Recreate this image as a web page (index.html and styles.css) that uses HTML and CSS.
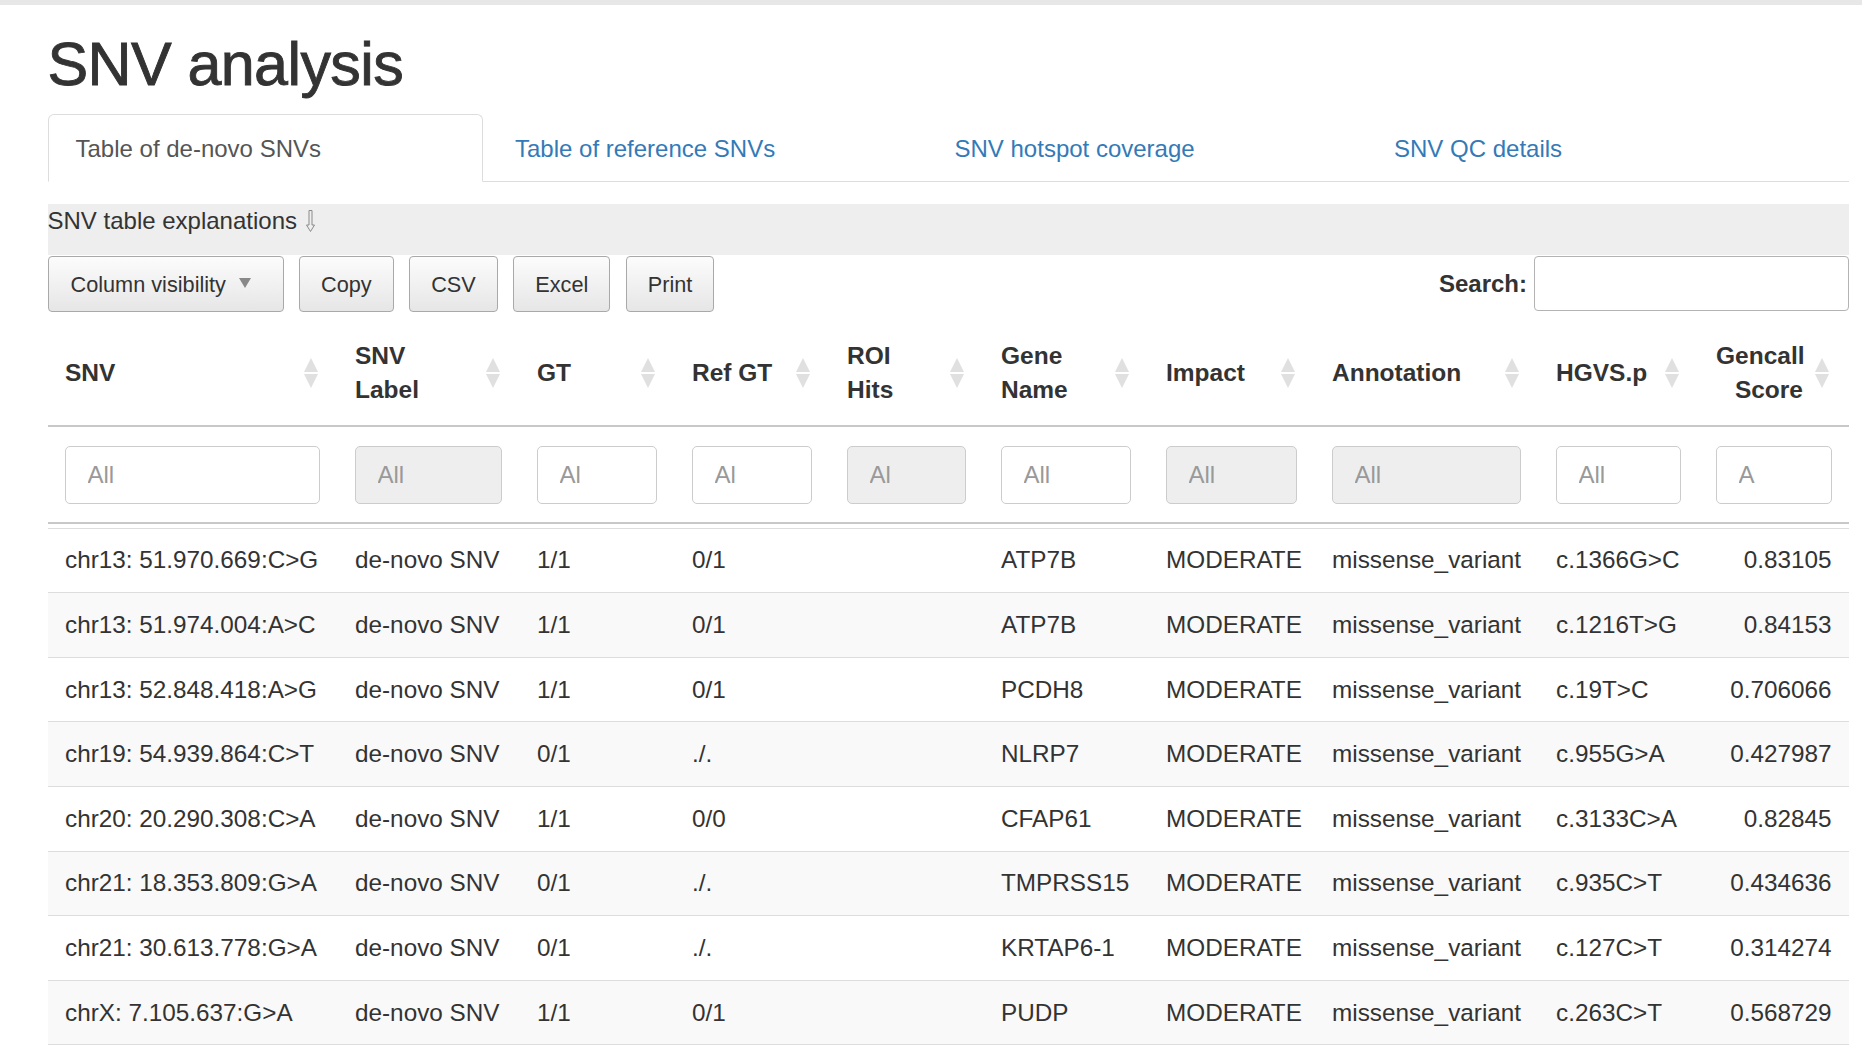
FILE: index.html
```html
<!DOCTYPE html>
<html lang="en">
<head>
<meta charset="utf-8">
<title>SNV analysis</title>
<link rel="stylesheet" href="styles.css">
</head>
<body>
<div class="topbar"></div>
<div class="container">
  <h1>SNV analysis</h1>
  <ul class="tabs">
    <li class="active"><a href="#">Table of de-novo SNVs</a></li>
    <li><a href="#">Table of reference SNVs</a></li>
    <li><a href="#">SNV hotspot coverage</a></li>
    <li><a href="#">SNV QC details</a></li>
  </ul>
  <div class="explain">SNV table explanations<svg class="down" width="9" height="22" viewBox="0 0 9 22"><path d="M3 0.5 H6 V15 H8.5 L4.5 21.5 L0.5 15 H3 Z" fill="none" stroke="#8a8a8a" stroke-width="1"/></svg></div>
  <div class="toolbar">
    <div class="btns">
      <button class="btn btn-cv">Column visibility<svg width="12" height="10" viewBox="0 0 12 10"><polygon points="0,0 12,0 6,10" fill="#888"/></svg></button>
      <button class="btn">Copy</button>
      <button class="btn">CSV</button>
      <button class="btn">Excel</button>
      <button class="btn">Print</button>
    </div>
    <label class="search">Search:<input type="text"></label>
  </div>
  <table class="snv">
    <colgroup>
      <col class="c1"><col class="c2"><col class="c3"><col class="c4"><col class="c5">
      <col class="c6"><col class="c7"><col class="c8"><col class="c9"><col class="c10">
    </colgroup>
    <thead>
      <tr class="heads">
        <th>SNV<span class="sorti"></span></th>
        <th>SNV<br>Label<span class="sorti"></span></th>
        <th>GT<span class="sorti"></span></th>
        <th>Ref GT<span class="sorti"></span></th>
        <th>ROI<br>Hits<span class="sorti"></span></th>
        <th>Gene<br>Name<span class="sorti"></span></th>
        <th>Impact<span class="sorti"></span></th>
        <th>Annotation<span class="sorti"></span></th>
        <th>HGVS.p<span class="sorti"></span></th>
        <th class="num">Gencall<br>Score<span class="sorti"></span></th>
      </tr>
      <tr class="filters">
        <td><input type="text" placeholder="All"></td>
        <td><input type="text" placeholder="All" disabled></td>
        <td><input type="text" placeholder="Al"></td>
        <td><input type="text" placeholder="Al"></td>
        <td><input type="text" placeholder="Al" disabled></td>
        <td><input type="text" placeholder="All"></td>
        <td><input type="text" placeholder="All" disabled></td>
        <td><input type="text" placeholder="All" disabled></td>
        <td><input type="text" placeholder="All"></td>
        <td><input type="text" placeholder="A"></td>
      </tr>
    </thead>
    <tbody>
      <tr><td>chr13: 51.970.669:C&gt;G</td><td>de-novo SNV</td><td>1/1</td><td>0/1</td><td></td><td>ATP7B</td><td>MODERATE</td><td>missense_variant</td><td>c.1366G&gt;C</td><td class="num">0.83105</td></tr>
      <tr><td>chr13: 51.974.004:A&gt;C</td><td>de-novo SNV</td><td>1/1</td><td>0/1</td><td></td><td>ATP7B</td><td>MODERATE</td><td>missense_variant</td><td>c.1216T&gt;G</td><td class="num">0.84153</td></tr>
      <tr><td>chr13: 52.848.418:A&gt;G</td><td>de-novo SNV</td><td>1/1</td><td>0/1</td><td></td><td>PCDH8</td><td>MODERATE</td><td>missense_variant</td><td>c.19T&gt;C</td><td class="num">0.706066</td></tr>
      <tr><td>chr19: 54.939.864:C&gt;T</td><td>de-novo SNV</td><td>0/1</td><td>./.</td><td></td><td>NLRP7</td><td>MODERATE</td><td>missense_variant</td><td>c.955G&gt;A</td><td class="num">0.427987</td></tr>
      <tr><td>chr20: 20.290.308:C&gt;A</td><td>de-novo SNV</td><td>1/1</td><td>0/0</td><td></td><td>CFAP61</td><td>MODERATE</td><td>missense_variant</td><td>c.3133C&gt;A</td><td class="num">0.82845</td></tr>
      <tr><td>chr21: 18.353.809:G&gt;A</td><td>de-novo SNV</td><td>0/1</td><td>./.</td><td></td><td>TMPRSS15</td><td>MODERATE</td><td>missense_variant</td><td>c.935C&gt;T</td><td class="num">0.434636</td></tr>
      <tr><td>chr21: 30.613.778:G&gt;A</td><td>de-novo SNV</td><td>0/1</td><td>./.</td><td></td><td>KRTAP6-1</td><td>MODERATE</td><td>missense_variant</td><td>c.127C&gt;T</td><td class="num">0.314274</td></tr>
      <tr><td>chrX: 7.105.637:G&gt;A</td><td>de-novo SNV</td><td>1/1</td><td>0/1</td><td></td><td>PUDP</td><td>MODERATE</td><td>missense_variant</td><td>c.263C&gt;T</td><td class="num">0.568729</td></tr>
    </tbody>
  </table>
</div>
</body>
</html>
```
FILE: styles.css
```css
* { box-sizing: border-box; }

body {
  margin: 0;
  font-family: "Liberation Sans", Arial, sans-serif;
  font-size: 24px;
  line-height: 34px;
  color: #333;
  background: #fff;
}

.topbar {
  height: 5px;
  background: #e7e7e7;
}

.container {
  margin-left: 47.5px;
  width: 1801.5px;
}

h1 {
  margin: 26px 0 0;
  font-size: 61px;
  line-height: 66px;
  font-weight: 500;
  letter-spacing: -0.6px;
  color: #333;
  -webkit-text-stroke: 0.9px #333;
}

.tabs {
  display: flex;
  list-style: none;
  margin: 16.6px 0 0;
  padding: 0;
  border-bottom: 1px solid #ddd;
}

.tabs li {
  flex: 0 0 435px;
  margin-right: 4.5px;
  margin-bottom: -1px;
}

.tabs a {
  display: block;
  padding: 17px 27px 15px;
  line-height: 34px;
  border: 1px solid transparent;
  border-radius: 6px 6px 0 0;
  color: #337ab7;
  text-decoration: none;
}

.tabs li.active a {
  color: #555;
  background: #fff;
  border-color: #ddd #ddd transparent;
}

.explain {
  margin-top: 22px;
  background: #eee;
  padding: 0 0 17px;
  line-height: 34px;
  color: #333;
}

.explain .down {
  margin-left: 9px;
  vertical-align: -3px;
}

.toolbar {
  margin-top: 1px;
  display: flex;
  justify-content: space-between;
  align-items: center;
  height: 56px;
}

.btns {
  display: flex;
  gap: 15.5px;
}

.btn {
  display: flex;
  align-items: center;
  height: 56px;
  padding: 3px 21px 0;
  font-family: "Liberation Sans", Arial, sans-serif;
  font-size: 21.7px;
  color: #333;
  border: 1px solid #a9a9a9;
  border-radius: 4px;
  background: linear-gradient(#fcfcfc, #e6e6e6);
}

.btn-cv {
  width: 236px;
  padding-left: 22px;
}

.btn-cv svg {
  margin-left: auto;
  margin-right: 11px;
  margin-bottom: 5px;
}

.search {
  display: flex;
  align-items: center;
  font-weight: bold;
  font-size: 24px;
}

.search input {
  margin-left: 7px;
  width: 315px;
  height: 55px;
  border: 1px solid #b3b3b3;
  border-radius: 4px;
  font-size: 24px;
  font-family: "Liberation Sans", Arial, sans-serif;
}

.snv {
  width: 1801.5px;
  table-layout: fixed;
  border-collapse: separate;
  border-spacing: 0;
  margin-top: 10px;
}

.c1 { width: 290px; }
.c2 { width: 182px; }
.c3 { width: 155px; }
.c4 { width: 155px; }
.c5 { width: 154px; }
.c6 { width: 165px; }
.c7 { width: 166px; }
.c8 { width: 224px; }
.c9 { width: 160px; }
.c10 { width: 150.5px; }

.snv th {
  position: relative;
  font-size: 24.5px;
  font-weight: bold;
  text-align: left;
  vertical-align: middle;
  white-space: nowrap;
  padding: 17px 46px 17px 17.5px;
  line-height: 34.5px;
  border-bottom: 2px solid #c8c8c8;
  color: #333;
}

.snv th.num { text-align: right; }

.sorti {
  position: absolute;
  right: 20px;
  top: 50%;
  width: 14px;
  height: 30px;
  margin-top: -15px;
}

.sorti::before,
.sorti::after {
  content: "";
  position: absolute;
  left: 0;
  width: 0;
  height: 0;
  border-left: 7px solid transparent;
  border-right: 7px solid transparent;
}

.sorti::before {
  top: 0;
  border-bottom: 14px solid #e0e0e0;
}

.sorti::after {
  bottom: 0;
  border-top: 14px solid #e0e0e0;
}

.filters td {
  padding: 19px 17.5px 24px;
  border-bottom: 1px solid #ddd;
  background-image: linear-gradient(#c8c8c8, #c8c8c8);
  background-size: 100% 2px;
  background-position: 0 calc(100% - 4px);
  background-repeat: no-repeat;
}

.filters input {
  display: block;
  width: 100%;
  height: 58px;
  padding: 0 21.5px;
  border: 1px solid #ccc;
  border-radius: 5px;
  font-family: "Liberation Sans", Arial, sans-serif;
  font-size: 24px;
  color: #555;
  background: #fff;
}

.filters input::placeholder { color: #999; }

.filters input:disabled { background: #eee; }

.snv tbody td {
  padding: 14.8px 17.5px;
  line-height: 34px;
  border-top: 1px solid #ddd;
  white-space: nowrap;
  color: #333;
  font-size: 24.3px;
}

.snv tbody tr:first-child td { border-top: 0; }

.snv tbody tr:last-child td { border-bottom: 1px solid #ddd; }

.snv tbody tr:nth-child(even) td { background: #f9f9f9; }

.snv td.num { text-align: right; }
```
